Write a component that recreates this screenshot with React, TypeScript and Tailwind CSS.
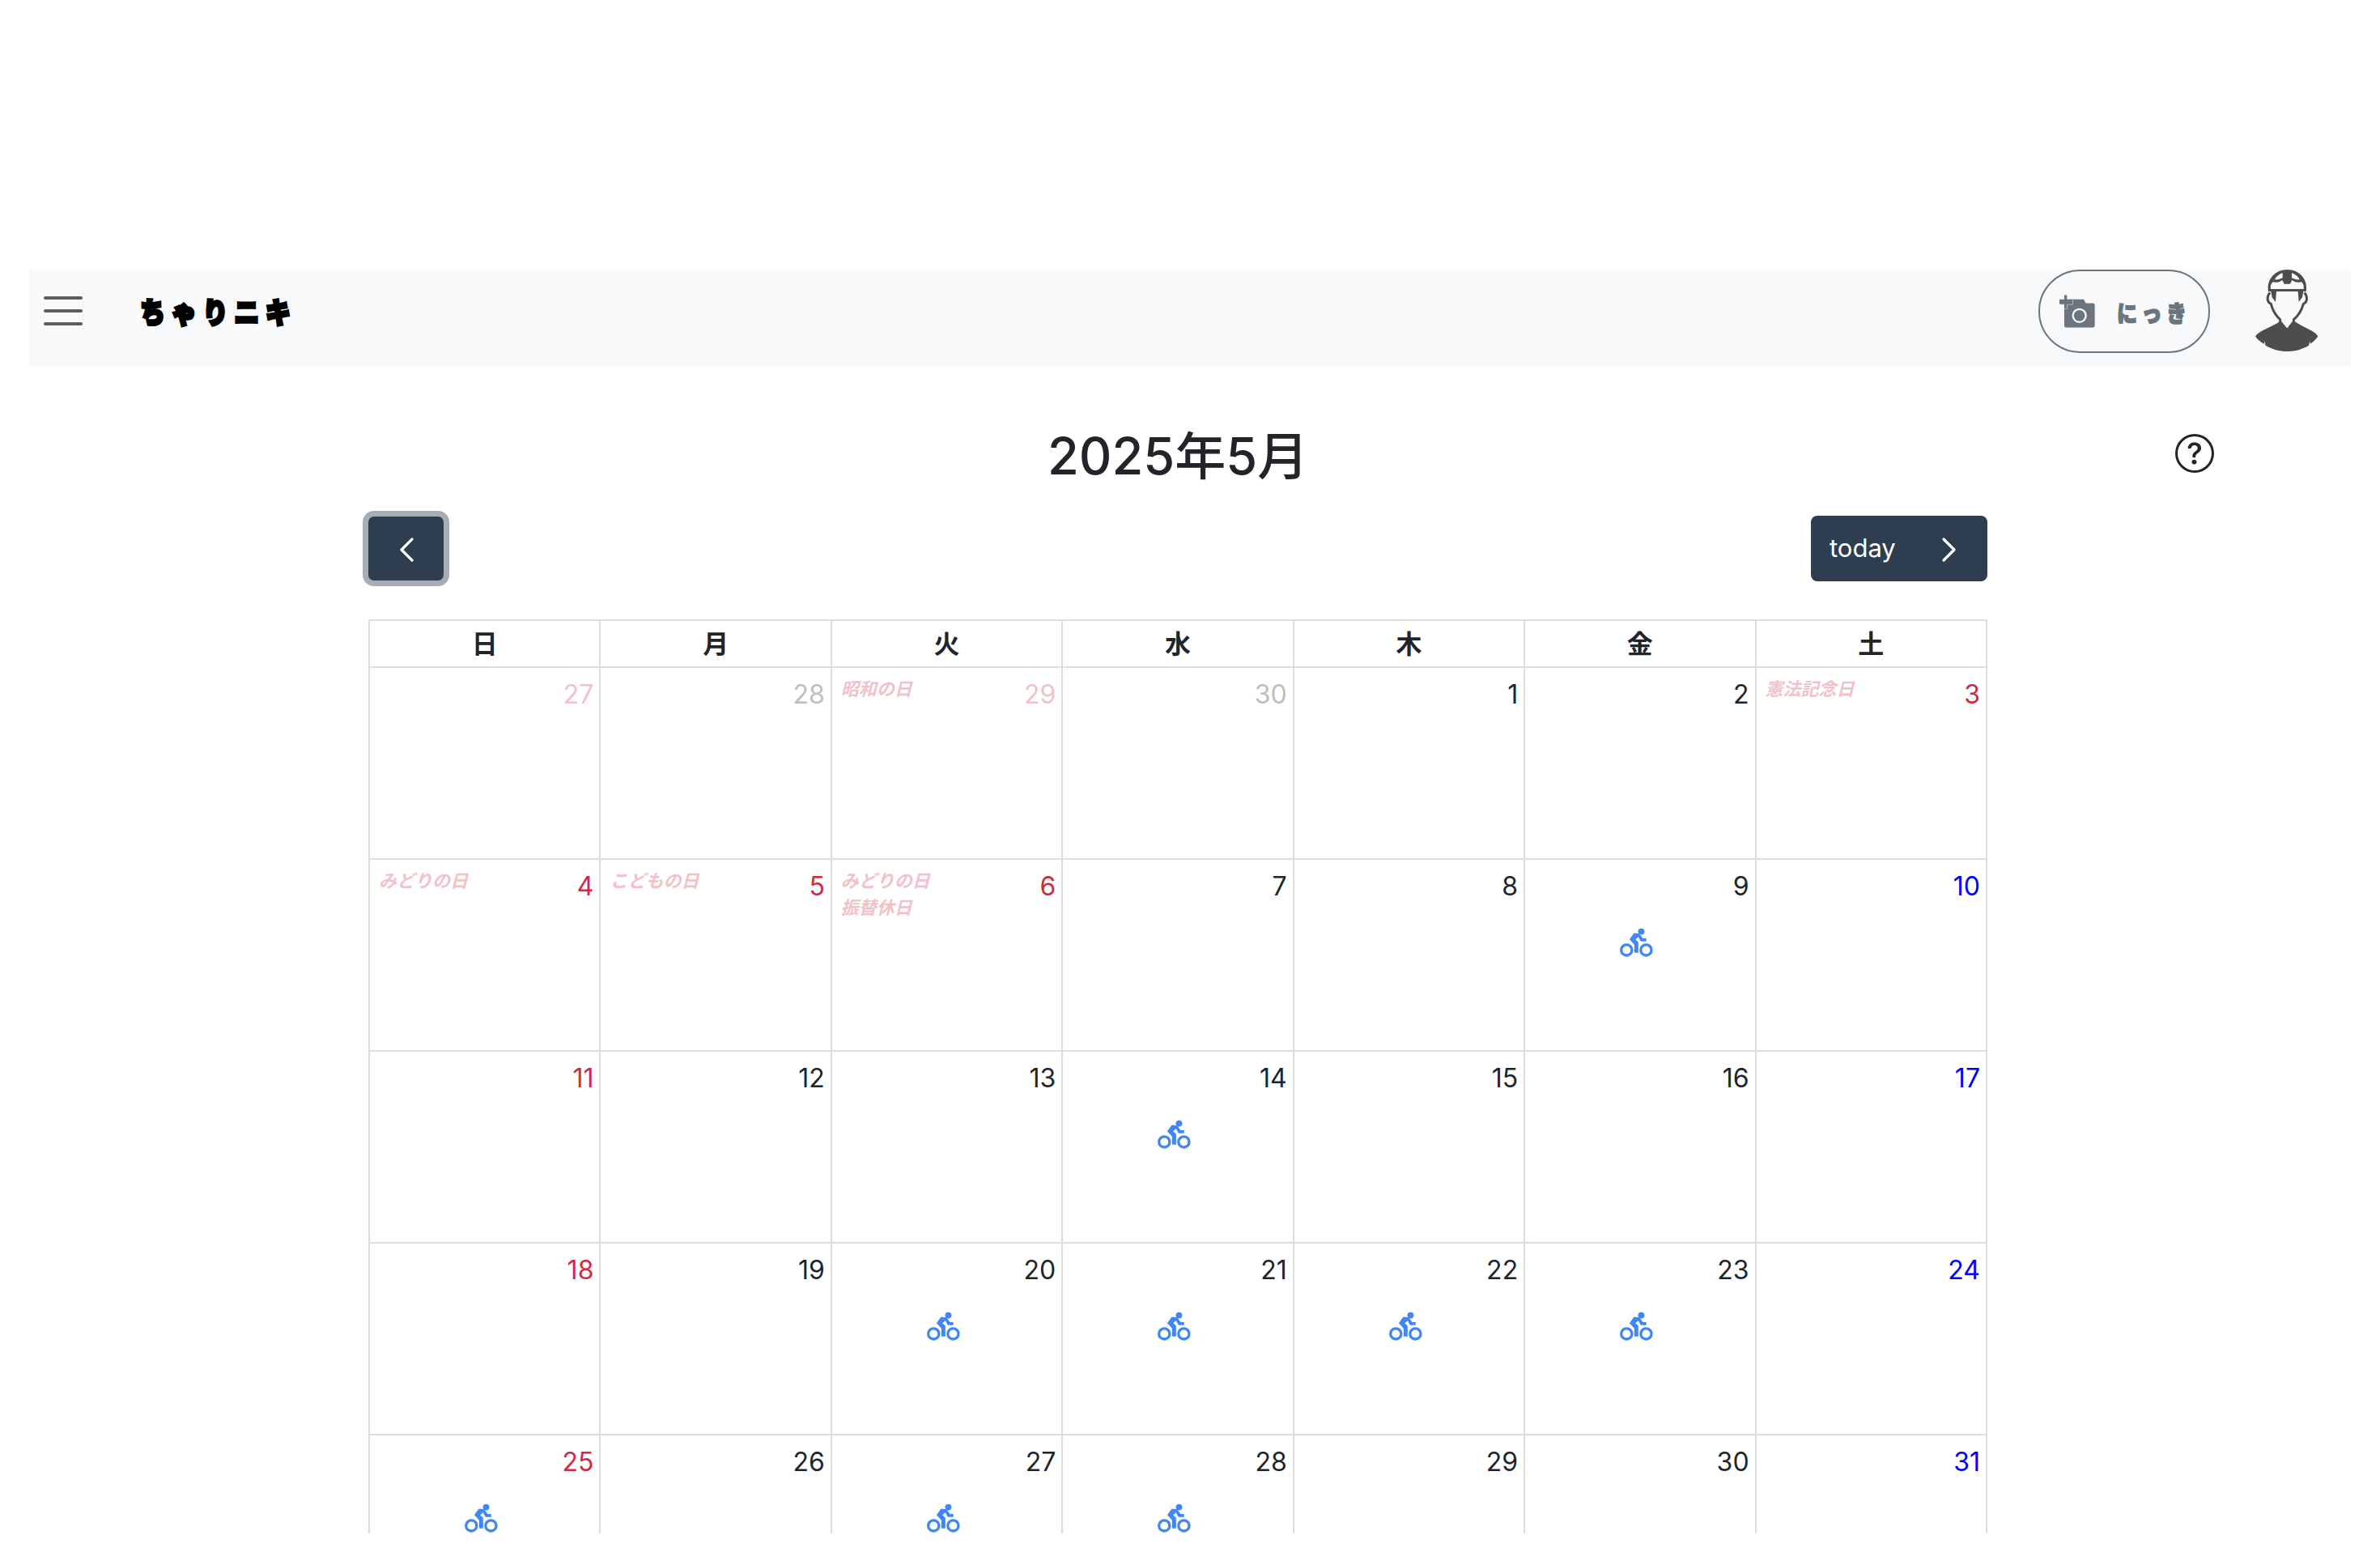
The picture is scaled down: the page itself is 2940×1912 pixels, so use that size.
import React from "react";

const LATIN = "font-['Inter','Noto_Sans_CJK_JP',sans-serif]";

function Bike() {
  return (
    <svg viewBox="150 160 130 115" className="block h-[38px] w-[43px]" fill="none">
      <circle cx="178" cy="246" r="20" stroke="#3f86f7" strokeWidth="10" />
      <circle cx="251" cy="246" r="20" stroke="#3f86f7" strokeWidth="10" />
      <circle cx="233" cy="177" r="12" fill="#3f86f7" />
      <path d="M206 183 L189 206 L207 226 L207 256 L222 256 L222 216 L211 206 L222 197 L231 214 L252 214 L252 202 L239 202 L226 185 Z" fill="#3f86f7" />
    </svg>
  );
}

type Cell = { n: number; tone: string; holidays?: string[]; bike?: boolean };

const black = "text-[#212529]";
const red = "text-[#cf2a3f]";
const blue = "text-[#0000ff]";
const gray = "text-[#bcbec0]";
const pink = "text-[#f1c2c7]";

const rows: Cell[][] = [
  [
    { n: 27, tone: pink },
    { n: 28, tone: gray },
    { n: 29, tone: pink, holidays: ["昭和の日"] },
    { n: 30, tone: gray },
    { n: 1, tone: black },
    { n: 2, tone: black },
    { n: 3, tone: red, holidays: ["憲法記念日"] },
  ],
  [
    { n: 4, tone: red, holidays: ["みどりの日"] },
    { n: 5, tone: red, holidays: ["こどもの日"] },
    { n: 6, tone: red, holidays: ["みどりの日", "振替休日"] },
    { n: 7, tone: black },
    { n: 8, tone: black },
    { n: 9, tone: black, bike: true },
    { n: 10, tone: blue },
  ],
  [
    { n: 11, tone: red },
    { n: 12, tone: black },
    { n: 13, tone: black },
    { n: 14, tone: black, bike: true },
    { n: 15, tone: black },
    { n: 16, tone: black },
    { n: 17, tone: blue },
  ],
  [
    { n: 18, tone: red },
    { n: 19, tone: black },
    { n: 20, tone: black, bike: true },
    { n: 21, tone: black, bike: true },
    { n: 22, tone: black, bike: true },
    { n: 23, tone: black, bike: true },
    { n: 24, tone: blue },
  ],
  [
    { n: 25, tone: red, bike: true },
    { n: 26, tone: black },
    { n: 27, tone: black, bike: true },
    { n: 28, tone: black, bike: true },
    { n: 29, tone: black },
    { n: 30, tone: black },
    { n: 31, tone: blue },
  ],
];

function Avatar() {
  return (
    <svg viewBox="0 0 300 336" className="block h-[112px] w-[100px]">
      <path d="M30 262 C45 240 85 232 125 205 L148 240 L172 205 C210 232 250 240 262 262 C250 282 238 285 228 296 C205 310 178 318 148 318 C118 318 92 310 68 296 C58 285 42 282 30 262 Z" fill="#4d4d4d" />
      <path d="M84 100 C72 115 72 135 88 142 C94 165 105 185 122 200 L122 208 L148 240 L172 208 L172 200 C190 185 202 165 208 142 C224 135 224 115 212 100" fill="#f8f9fa" stroke="#4d4d4d" strokeWidth="9" />
      <path d="M88 95 L108 95 L105 135 L92 118 Z M208 95 L188 95 L191 135 L204 118 Z" fill="#4d4d4d" />
      <path d="M78 96 C70 50 105 15 148 15 C192 15 226 50 218 96 Z" fill="#4d4d4d" />
      <path d="M87 87 C85 72 89 66 96 60 C110 66 122 60 130 54 L137 68 L159 68 L166 54 C174 60 186 66 200 60 C207 66 211 72 209 87 Z" fill="#f8f9fa" />
      <path d="M102 52 C106 42 118 32 131 28 L131 46 C122 50 112 53 102 52 Z M194 52 C190 42 178 32 165 28 L165 46 C174 50 184 53 194 52 Z" fill="#f8f9fa" />
      <path d="M64 280 L68 296 L62 291 Z M232 280 L228 296 L234 291 Z" fill="#f8f9fa" />
    </svg>
  );
}

function Camera() {
  return (
    <svg viewBox="278 155 135 125" className="block h-[42px] w-[45px]">
      <path d="M296 172 L368 172 L376 186 L402 186 Q409 186 409 193 L409 268 Q409 276 402 276 L303 276 Q296 276 296 268 Z" fill="#6c757d" />
      <circle cx="352" cy="232" r="24" fill="none" stroke="#f8f9fa" strokeWidth="7" />
      <path d="M296 156 L306 156 L306 172 L326 172 L326 190 L306 190 L306 206 L296 206 L296 190 L278 190 L278 172 L296 172 Z" fill="#6c757d" stroke="#f8f9fa" strokeWidth="3" paintOrder="stroke" />
    </svg>
  );
}

export default function App() {
  return (
    <div className={`h-[1894px] overflow-hidden bg-white pt-[333px] ${LATIN}`}>
      <nav className="mx-[36px] flex h-[119px] items-start bg-[#f8f9fa]">
        <svg viewBox="0 0 48 36" className="ml-[18px] mt-[33px] block h-[36px] w-[48px]" fill="none">
          <path d="M2 2 H46 M2 18 H46 M2 34 H46" stroke="#5f5f5f" strokeWidth="4" strokeLinecap="round" />
        </svg>
        <div className="ml-[71px] mt-[26px] flex w-[186px] scale-y-115 justify-between font-['Noto_Sans_CJK_JP',sans-serif] text-[31px] leading-[50px] font-black text-black [-webkit-text-stroke:3px_black]">
          <span>ち</span>
          <span>ゃ</span>
          <span>り</span>
          <span>ニ</span>
          <span>キ</span>
        </div>
        <button className="ml-auto flex h-[103px] w-[212px] items-center rounded-full border-2 border-[#6c757d] pl-[24px]">
          <Camera />
          <span className="ml-[26px] flex w-[86px] scale-y-115 justify-between font-['Noto_Sans_CJK_JP',sans-serif] text-[25px] leading-[40px] font-black text-[#6c757d] [-webkit-text-stroke:1.5px_#6c757d]">
            <span>に</span>
            <span>っ</span>
            <span>き</span>
          </span>
        </button>
        <div className="ml-[46px] mr-[28px] -mt-[5px]">
          <Avatar />
        </div>
      </nav>

      <div className="mt-[72px] flex h-[78px] items-center justify-between pl-[1294px] pr-[205px]">
        <h2 className="text-[63px] leading-[78px] font-medium text-[#212529] font-['Inter','Noto_Sans_CJK_JP',sans-serif]">
          2025年5月
        </h2>
        <svg viewBox="0 0 16 16" className="block h-[48px] w-[48px] -mt-[6px]" fill="#212529">
          <path d="M8 15A7 7 0 1 1 8 1a7 7 0 0 1 0 14m0 1A8 8 0 1 0 8 0a8 8 0 0 0 0 16" />
          <path d="M5.255 5.786a.237.237 0 0 0 .241.247h.825c.138 0 .248-.113.266-.25.09-.656.54-1.134 1.342-1.134.686 0 1.314.343 1.314 1.168 0 .635-.374.927-.965 1.371-.673.489-1.206 1.06-1.168 1.987l.003.217a.25.25 0 0 0 .25.246h.811a.25.25 0 0 0 .25-.25v-.105c0-.718.273-.927 1.01-1.486.609-.463 1.244-.977 1.244-2.056 0-1.511-1.276-2.241-2.673-2.241-1.267 0-2.655.59-2.75 2.286m1.557 5.763c0 .533.425.927 1.01.927.609 0 1.028-.394 1.028-.927 0-.552-.42-.94-1.029-.94-.584 0-1.009.388-1.009.94" />
        </svg>
      </div>

      <div className="mt-[29px] flex h-[93px] items-start justify-between pl-[448px] pr-[485px]">
        <button className="flex h-[93px] w-[107px] items-center justify-center rounded-[14px] border-[7px] border-[#a7adb5] bg-[#2e3d50]">
          <svg viewBox="0 0 18 30" className="mt-[2px] block h-[30px] w-[18px]" fill="none">
            <path d="M16 2 L3 15 L16 28" stroke="#ffffff" strokeWidth="3.2" strokeLinecap="round" strokeLinejoin="round" />
          </svg>
        </button>
        <button className="mt-[6px] flex h-[81px] w-[218px] items-center rounded-[8px] bg-[#2e3d50] pl-[23px] pr-[38px] text-[31px] text-white">
          <span>today</span>
          <svg viewBox="0 0 18 30" className="ml-auto mt-[2px] block h-[30px] w-[18px]" fill="none">
            <path d="M2 2 L15 15 L2 28" stroke="#ffffff" strokeWidth="3.2" strokeLinecap="round" strokeLinejoin="round" />
          </svg>
        </button>
      </div>

      <div className="ml-[455px] mt-[41px] w-[2000px] border-r-2 border-[#dddddd]">
        <div className="grid h-[58px] grid-cols-7">
          {["日", "月", "火", "水", "木", "金", "土"].map((d) => (
            <div key={d} className="flex items-center justify-center border-l-2 border-t-2 border-[#dddddd] pt-[2px] text-[32px] font-bold text-[#212529]">
              {d}
            </div>
          ))}
        </div>
        {rows.map((row, i) => (
          <div key={i} className="grid h-[237px] grid-cols-7">
            {row.map((c, j) => (
              <div key={j} className="flex flex-col border-l-2 border-t-2 border-[#dddddd]">
                <div className="flex h-[83px] items-start justify-between pl-[11px] pr-[7px]">
                  <div className="pt-[10px] text-[22px] leading-[33px] font-bold italic text-[#f1c2c7]">
                    {(c.holidays ?? []).map((h) => (
                      <div key={h}>{h}</div>
                    ))}
                  </div>
                  <span className={`pt-[9px] text-[32px] leading-[48px] ${c.tone}`}>{c.n}</span>
                </div>
                {c.bike && (
                  <div className="flex justify-center pr-[8px]">
                    <Bike />
                  </div>
                )}
              </div>
            ))}
          </div>
        ))}
      </div>
    </div>
  );
}
